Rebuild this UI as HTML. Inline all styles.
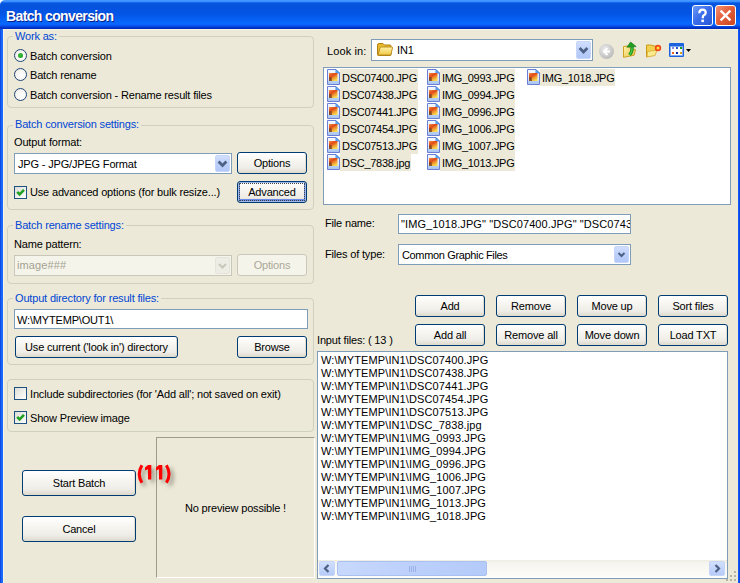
<!DOCTYPE html>
<html><head><meta charset="utf-8">
<style>
*{box-sizing:border-box;margin:0;padding:0}
html,body{width:740px;height:583px;overflow:hidden;background:#fff}
body{position:relative;font-family:"Liberation Sans",sans-serif;font-size:11px;line-height:13px;color:#000;letter-spacing:-0.17px}
.a{position:absolute;white-space:nowrap}
#title{left:0;top:0;width:740px;height:29px;border-radius:5px 0 0 0;
 background:linear-gradient(#4A9CFF 0px,#3A8EFF 1.5px,#1469EE 2.5px,#0755DC 3.5px,#0552DE 7px,#0455E6 14px,#0560F2 19px,#0868FF 24px,#0A5EF8 25px,#0547DE 26.5px,#0030C4 28px,#0028B8 29px)}
#ttext{left:6px;top:8px;color:#fff;font-weight:bold;font-size:14px;line-height:16px;letter-spacing:-0.63px;text-shadow:1px 1px 0 #0A1E8C}
#bl{left:0;top:29px;width:3px;height:554px;background:linear-gradient(90deg,#0A38CC,#1460F2 1px,#1A6AFF 2px)}
#br{left:738px;top:29px;width:2px;height:554px;background:linear-gradient(90deg,#1060FF,#0A40D8)}
#body{left:3px;top:29px;width:735px;height:554px;background:#ECE9D8;border-top:1px solid #F8F5E2;border-left:1px solid #F5F3E6}
.tb{width:21px;height:21px;border:1px solid #fff;border-radius:3px}
.grp{border:1px solid #D0D0BF;border-radius:4px}
.gl{color:#0046D5;background:#ECE9D8;padding:0 2px}
.btn{border:1px solid #003C74;border-radius:3px;background:linear-gradient(#FFFFFF,#F6F5F0 40%,#EEEDE7 75%,#E3E0D6 92%,#D6D0C5);text-align:center;padding-top:4px;box-shadow:inset -1px -1px 0 #E0DCCF}
.btn.dis{border-color:#C9C7BA;background:#F5F4EA;color:#ACA899;box-shadow:none}
.edit{border:1px solid #7F9DB9;background:#fff}
.dd{width:15px;height:17px;border-radius:2px;border:1px solid #C6D6FA;background:linear-gradient(#D2DFFD,#BDD0FA 50%,#B2C8F8)}
.chk{width:13px;height:13px;border:1px solid #1C5180;background:linear-gradient(135deg,#DCDCD7,#FFFFFF)}
.rad{width:13px;height:13px;border:1.3px solid #1F4575;border-radius:50%;background:radial-gradient(circle at 62% 62%,#FFFFFF,#F6F5F2 55%,#E2E0D8)}
.fi{height:17px;padding-left:13px;letter-spacing:-0.28px}
.fi span{display:block;background:#ECE9D8;padding:3px 1px 0 2px;height:17px}
.ico{position:absolute;left:0;top:0;width:13px;height:16px}
.lst{letter-spacing:0.1px}
.lst div{height:13px}
</style></head><body>
<div class="a" id="title"></div>
<div class="a" id="ttext">Batch conversion</div>
<div class="a tb" style="left:692px;top:5px;background:linear-gradient(135deg,#6C9BF8,#3C6EEA 45%,#2858D8)"><svg width="19" height="19" style="position:absolute;left:0;top:0"><path d="M6.3 7.2 Q6.3 3.6 9.5 3.6 Q12.7 3.6 12.7 6.6 Q12.7 8.6 10.2 9.7 L9.6 12.3" stroke="#fff" stroke-width="2.2" fill="none"/><rect x="8.4" y="13.6" width="2.5" height="2.5" fill="#fff"/></svg></div>
<div class="a tb" style="left:715px;top:5px;background:linear-gradient(135deg,#F49272,#E4603A 45%,#CC4520)"><svg width="19" height="19" style="position:absolute;left:0;top:0"><path d="M4.6 4.6 L14.4 14.4 M14.4 4.6 L4.6 14.4" stroke="#fff" stroke-width="2.3"/></svg></div>
<div class="a" id="bl"></div><div class="a" id="br"></div>
<div class="a" id="body"></div>

<!-- Work as -->
<div class="a grp" style="left:7px;top:36px;width:307px;height:72px"></div>
<div class="a gl" style="left:13px;top:30px">Work as:</div>
<div class="a rad" style="left:14px;top:49px"><div style="position:absolute;left:3px;top:3px;width:5px;height:5px;border-radius:50%;background:radial-gradient(circle at 45% 40%,#40C040,#129612)"></div></div>
<div class="a" style="left:30px;top:50px">Batch conversion</div>
<div class="a rad" style="left:14px;top:68px"></div>
<div class="a" style="left:30px;top:69px">Batch rename</div>
<div class="a rad" style="left:14px;top:88px"></div>
<div class="a" style="left:30px;top:89px">Batch conversion - Rename result files</div>

<!-- Batch conversion settings -->
<div class="a grp" style="left:7px;top:125px;width:307px;height:85px"></div>
<div class="a gl" style="left:13px;top:118px">Batch conversion settings:</div>
<div class="a" style="left:14px;top:136px">Output format:</div>
<div class="a edit" style="left:14px;top:153px;width:218px;height:21px"><div class="a" style="left:3px;top:4px">JPG - JPG/JPEG Format</div><div class="a dd" style="left:200px;top:1px"><svg width="13" height="15" style="position:absolute;left:0;top:0"><path d="M2.6 5.6 L6.5 9.5 L10.4 5.6" stroke="#4D6185" stroke-width="2.8" fill="none"/></svg></div></div>
<div class="a btn" style="left:237px;top:152px;width:70px;height:22px">Options</div>
<div class="a chk" style="left:14px;top:186px"><svg width="11" height="11" style="position:absolute;left:0;top:0"><path d="M2.2 4.8 L4.6 7.3 L9 2.8" stroke="#21A121" stroke-width="2.6" fill="none"/></svg></div>
<div class="a" style="left:30px;top:186px">Use advanced options (for bulk resize...)</div>
<div class="a btn" style="left:237px;top:181px;width:70px;height:22px;box-shadow:inset 0 0 0 1px #9DB9EB,inset 0 -1px 0 2px #6A8BEA">Advanced</div>
<div class="a" style="left:239px;top:183px;width:66px;height:18px;border:1px dotted #444"></div>

<!-- Batch rename settings -->
<div class="a grp" style="left:7px;top:225px;width:307px;height:59px"></div>
<div class="a gl" style="left:13px;top:219px">Batch rename settings:</div>
<div class="a" style="left:14px;top:238px">Name pattern:</div>
<div class="a edit" style="left:14px;top:255px;width:218px;height:21px;border-color:#C9C7BA;background:#F5F4EA"><div class="a" style="left:2px;top:3px;color:#A4A192;letter-spacing:0.1px">image###</div><div class="a dd" style="left:200px;top:1px;background:#EEEDE5;border-color:#E6E4DA"><svg width="13" height="15" style="position:absolute;left:0;top:0"><path d="M3 6 L6.5 9.5 L10 6" stroke="#C9C7BA" stroke-width="2" fill="none"/></svg></div></div>
<div class="a btn dis" style="left:237px;top:254px;width:70px;height:22px">Options</div>

<!-- Output directory -->
<div class="a grp" style="left:7px;top:298px;width:307px;height:67px"></div>
<div class="a gl" style="left:13px;top:292px">Output directory for result files:</div>
<div class="a edit" style="left:14px;top:309px;width:294px;height:20px"><div class="a" style="left:2px;top:4px">W:\MYTEMP\OUT1\</div></div>
<div class="a btn" style="left:15px;top:336px;width:163px;height:22px">Use current ('look in') directory</div>
<div class="a btn" style="left:237px;top:336px;width:70px;height:22px">Browse</div>

<!-- options group -->
<div class="a grp" style="left:7px;top:379px;width:307px;height:53px"></div>
<div class="a chk" style="left:14px;top:387px"></div>
<div class="a" style="left:30px;top:388px">Include subdirectories (for 'Add all'; not saved on exit)</div>
<div class="a chk" style="left:14px;top:411px"><svg width="11" height="11" style="position:absolute;left:0;top:0"><path d="M2.2 4.8 L4.6 7.3 L9 2.8" stroke="#21A121" stroke-width="2.6" fill="none"/></svg></div>
<div class="a" style="left:30px;top:412px">Show Preview image</div>

<!-- preview -->
<div class="a" style="left:156px;top:437px;width:159px;height:141px;border-left:1px solid #9D9A8C;border-top:1px solid #9D9A8C;border-right:1px solid #fff;border-bottom:1px solid #fff"></div>
<div class="a" style="left:185px;top:502px">No preview possible !</div>

<div class="a btn" style="left:22px;top:470px;width:114px;height:26px;padding-top:6px">Start Batch</div>
<div class="a btn" style="left:22px;top:516px;width:114px;height:26px;padding-top:6px">Cancel</div>
<svg class="a" style="left:130px;top:458px;overflow:visible;filter:drop-shadow(3px 3px 2.2px rgba(60,55,40,0.5))" width="50" height="35"><g fill="#FF0000"><path d="M11.9 7.2 Q6.6 16 11.9 24.8" stroke="#FF0000" stroke-width="3.1" fill="none"/><path d="M36.4 7.2 Q41.7 16 36.4 24.8" stroke="#FF0000" stroke-width="3.1" fill="none"/><path d="M18 7 L21.3 7 L21.3 21.4 L18 21.4 L18 11.2 L15 12.6 L15 9.6 Z"/><path d="M29 7 L32.3 7 L32.3 21.4 L29 21.4 L29 11.2 L26 12.6 L26 9.6 Z"/></g></svg>

<!-- right side -->
<div class="a" style="left:327px;top:45px;letter-spacing:0.1px">Look in:</div>
<div class="a edit" style="left:371px;top:39px;width:222px;height:22px">
 <svg class="a" style="left:5px;top:3px" width="16" height="13" viewBox="0 0 16 13"><defs><linearGradient id="fg2" x1="0" y1="0" x2="0" y2="1"><stop offset="0" stop-color="#FFF2A8"/><stop offset="1" stop-color="#F0C848"/></linearGradient></defs><path d="M0.5 2 Q0.5 0.5 2 0.5 L6 0.5 L7.5 2 L13 2 Q14 2 14 3 L14 11.5 Q14 12.5 13 12.5 L1.5 12.5 Q0.5 12.5 0.5 11.5 Z" fill="#E8B830" stroke="#B08010"/><path d="M1 12 L3 5 Q3.3 4 4.5 4 L15 4 Q15.8 4 15.5 5 L13.8 12 Z" fill="url(#fg2)" stroke="#B88A18" stroke-width="0.9"/></svg>
 <div class="a" style="left:25px;top:4px">IN1</div>
 <div class="a dd" style="left:204px;top:1px;height:18px"><svg width="13" height="16" style="position:absolute;left:0;top:0"><path d="M2.6 6 L6.5 9.9 L10.4 6" stroke="#4D6185" stroke-width="2.8" fill="none"/></svg></div>
</div>
<div class="a" style="left:599px;top:44px;width:15px;height:15px;border-radius:50%;background:radial-gradient(circle at 40% 35%,#EDEDED,#C4C4C4 60%,#AAAAAA);"><svg width="15" height="15" style="position:absolute;left:0;top:0"><path d="M8.5 4 L5 7.5 L8.5 11 M5.5 7.5 L11 7.5" stroke="#fff" stroke-width="2" fill="none"/></svg></div>
<svg class="a" style="left:618px;top:38px" width="24" height="24" viewBox="0 0 24 24"><defs><linearGradient id="fy" x1="0" y1="0" x2="1" y2="1"><stop offset="0" stop-color="#FFF4B0"/><stop offset="1" stop-color="#E8C040"/></linearGradient></defs><path d="M5.5 8.5 L9.5 8 L11 9.5 L17.5 11.8 L16 17.3 L5.5 19.3 Z" fill="url(#fy)" stroke="#CFA020" stroke-width="1"/><path d="M14.2 8.8 Q14.3 14 11.6 17" stroke="#1A8A1A" stroke-width="3.2" fill="none"/><path d="M14.2 8.8 Q14.3 14 11.6 17" stroke="#48D048" stroke-width="1.2" fill="none"/><path d="M8.8 9.2 L12.6 4 L18.2 8.6 Z" fill="#20A020" stroke="#157015" stroke-width="0.6"/></svg>
<svg class="a" style="left:642px;top:38px" width="24" height="24" viewBox="0 0 24 24"><path d="M4.5 7 L8.5 7 L14.5 8.5 L14 13 L4.5 19 Z" fill="#F2D050" stroke="#C89A18" stroke-width="1"/><path d="M5.5 13.5 L15 12 L13 17.5 L5 19 Z" fill="#FAEA90" stroke="#D8A828" stroke-width="0.8"/><circle cx="16" cy="10" r="3.2" fill="#F04818"/><circle cx="16" cy="10" r="1.5" fill="#FFE040"/></svg>
<div class="a" style="left:669px;top:43px;width:15px;height:14px;border:1px solid #1A62DE;border-top:3px solid #1A62DE;border-radius:1px;background:#fff;box-shadow:inset 0 0 0 1px rgba(26,98,222,0.55)"><div class="a" style="left:1.5px;top:0.8px;width:2px;height:2px;background:#8A8AE2;box-shadow:4px 0 #2A58D0,8px 0 #18A018,0 5px #F06020,4px 5px #0A28A8,8px 5px #D8A010"></div></div>
<svg class="a" style="left:686px;top:49px" width="6" height="4"><path d="M0 0 L5 0 L2.5 3 Z" fill="#000"/></svg>

<div class="a edit" style="left:323px;top:67px;width:408px;height:138px"></div>
<div id="files"></div>

<div class="a" style="left:325px;top:217px">File name:</div>
<div class="a edit" style="left:398px;top:214px;width:233px;height:20px;overflow:hidden"><div class="a" style="left:2px;top:3px;letter-spacing:0.1px">"IMG_1018.JPG" "DSC07400.JPG" "DSC07438.JPG"</div></div>
<div class="a" style="left:325px;top:248px">Files of type:</div>
<div class="a edit" style="left:398px;top:244px;width:233px;height:21px"><div class="a" style="left:3px;top:4px;letter-spacing:-0.35px">Common Graphic Files</div><div class="a dd" style="left:215px;top:1px"><svg width="13" height="15" style="position:absolute;left:0;top:0"><path d="M3.5 6 L6.5 9 L9.5 6" stroke="#4D6185" stroke-width="2" fill="none"/></svg></div></div>

<div class="a btn" style="left:415px;top:295px;width:70px;height:22px">Add</div>
<div class="a btn" style="left:496px;top:295px;width:70px;height:22px">Remove</div>
<div class="a btn" style="left:577px;top:295px;width:70px;height:22px">Move up</div>
<div class="a btn" style="left:658px;top:295px;width:70px;height:22px">Sort files</div>
<div class="a btn" style="left:415px;top:324px;width:70px;height:22px">Add all</div>
<div class="a btn" style="left:496px;top:324px;width:70px;height:22px">Remove all</div>
<div class="a btn" style="left:577px;top:324px;width:70px;height:22px">Move down</div>
<div class="a btn" style="left:658px;top:324px;width:70px;height:22px">Load TXT</div>
<div class="a" style="left:317px;top:334px">Input files: ( 13 )</div>

<div class="a edit" style="left:317px;top:351px;width:411px;height:228px"></div>
<div class="a lst" style="left:321px;top:354px">
<div>W:\MYTEMP\IN1\DSC07400.JPG</div><div>W:\MYTEMP\IN1\DSC07438.JPG</div><div>W:\MYTEMP\IN1\DSC07441.JPG</div><div>W:\MYTEMP\IN1\DSC07454.JPG</div><div>W:\MYTEMP\IN1\DSC07513.JPG</div><div>W:\MYTEMP\IN1\DSC_7838.jpg</div><div>W:\MYTEMP\IN1\IMG_0993.JPG</div><div>W:\MYTEMP\IN1\IMG_0994.JPG</div><div>W:\MYTEMP\IN1\IMG_0996.JPG</div><div>W:\MYTEMP\IN1\IMG_1006.JPG</div><div>W:\MYTEMP\IN1\IMG_1007.JPG</div><div>W:\MYTEMP\IN1\IMG_1013.JPG</div><div>W:\MYTEMP\IN1\IMG_1018.JPG</div>
</div>
<!-- scrollbar -->
<div class="a" style="left:318px;top:560px;width:409px;height:17px;background:linear-gradient(#EEEDE4,#F6F5EF 20%,#FCFCF8)"></div>
<div class="a" style="left:319px;top:561px;width:16px;height:15px;border:1px solid #C6D6FA;border-radius:2px;background:linear-gradient(#D2DFFD,#B6CBF9)"><svg width="14" height="13" style="position:absolute;left:0;top:0"><path d="M8.5 3 L5 6.5 L8.5 10" stroke="#4D6185" stroke-width="2.2" fill="none"/></svg></div>
<div class="a" style="left:337px;top:561px;width:150px;height:15px;border:1px solid #A9C0F3;border-radius:2px;background:linear-gradient(90deg,#C8D8FC,#BCD0FB 50%,#B4CAF8)"><div class="a" style="left:71px;top:4px;width:1px;height:6px;background:#9AB2E8;box-shadow:2px 0 #9AB2E8,4px 0 #9AB2E8,6px 0 #9AB2E8"></div></div>
<div class="a" style="left:709px;top:561px;width:16px;height:15px;border:1px solid #C6D6FA;border-radius:2px;background:linear-gradient(#D2DFFD,#B6CBF9)"><svg width="14" height="13" style="position:absolute;left:0;top:0"><path d="M5.5 3 L9 6.5 L5.5 10" stroke="#4D6185" stroke-width="2.2" fill="none"/></svg></div>
<!-- grip -->
<div class="a" style="left:734px;top:571px;width:2px;height:2px;background:#B8B4A2;box-shadow:-4px 4px #B8B4A2,0 4px #B8B4A2,-8px 8px #B8B4A2,-4px 8px #B8B4A2,0 8px #B8B4A2"></div>

<script>
var f=[["DSC07400.JPG","DSC07438.JPG","DSC07441.JPG","DSC07454.JPG","DSC07513.JPG","DSC_7838.jpg"],["IMG_0993.JPG","IMG_0994.JPG","IMG_0996.JPG","IMG_1006.JPG","IMG_1007.JPG","IMG_1013.JPG"],["IMG_1018.JPG"]];
var xs=[327,427,527],h='';
for(var c=0;c<3;c++)for(var r=0;r<f[c].length;r++){
 h+='<div class="a fi" style="left:'+xs[c]+'px;top:'+(69+17*r)+'px"><svg class="ico" viewBox="0 0 13 16"><defs><linearGradient id="dg" x1="0" y1="0" x2="0" y2="1"><stop offset="0" stop-color="#F4F8FF"/><stop offset="0.72" stop-color="#DDE8FA"/><stop offset="0.78" stop-color="#B4D0F4"/><stop offset="1" stop-color="#A8C4EE"/></linearGradient><linearGradient id="ig" x1="0" y1="0" x2="0.6" y2="1"><stop offset="0" stop-color="#F49040"/><stop offset="0.4" stop-color="#E04818"/><stop offset="0.7" stop-color="#F09830"/><stop offset="1" stop-color="#F8D850"/></linearGradient></defs><path d="M0.5 0.5 L9 0.5 L12.5 4 L12.5 15.5 L0.5 15.5 Z" fill="url(#dg)" stroke="#6A7ED6"/><path d="M9 0.8 L9 4 L12.2 4 Z" fill="#8EC0F0" stroke="#3A86E0" stroke-width="0.9"/><rect x="2" y="4" width="8.5" height="8" fill="url(#ig)"/><path d="M2 12 L2 8.5 L4.5 8 L5 12 Z" fill="#6A3A20" opacity="0.75"/></svg><span>'+f[c][r]+'</span></div>';
}
document.getElementById('files').innerHTML=h;
</script>
</body></html>
